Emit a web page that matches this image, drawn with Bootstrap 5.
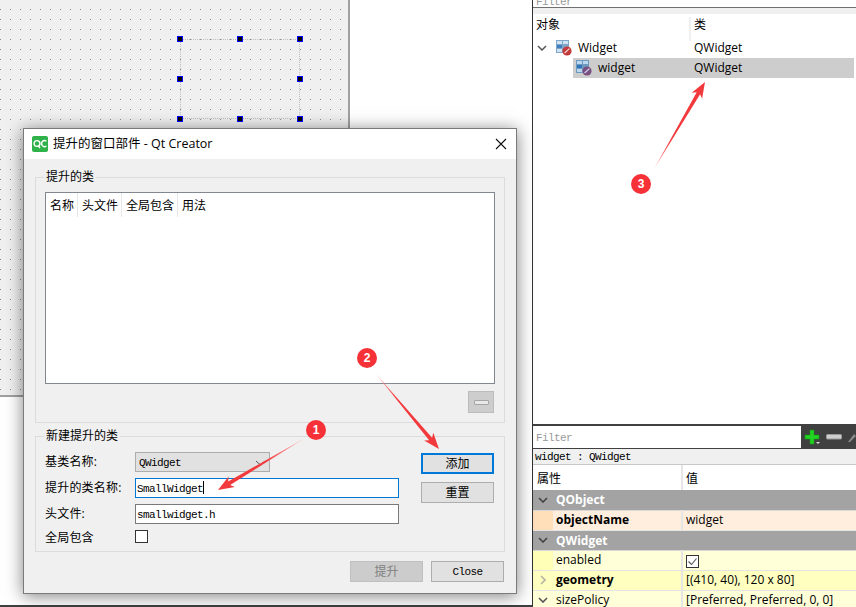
<!DOCTYPE html>
<html lang="zh">
<head>
<meta charset="utf-8">
<title>Qt Creator</title>
<link href="https://cdn.jsdelivr.net/npm/bootstrap@5.3.0/dist/css/bootstrap.min.css" rel="stylesheet">
<style>
html,body{margin:0;height:607px;overflow:hidden;background:#fff;}
body,.scene{font-family:"Open Sans","Noto Sans CJK SC",sans-serif;font-size:12px;line-height:16px;color:#000;}
.mono{font-family:"Liberation Mono","Noto Sans CJK SC",monospace;font-size:11px;letter-spacing:-.6px;}
.scene{position:relative;width:856px;height:607px;overflow:hidden;}
.leftpane{width:533px;height:607px;border-right:1px solid #333;border-bottom:2px solid #404040;flex:none;}
.canvas{position:relative;width:350px;height:397px;background-color:#f0f0f0;border-right:2px solid #a0a0a0;border-bottom:2px solid #a0a0a0;
 background-image:radial-gradient(circle at .5px .5px,#8a8a8a .7px,transparent .8px);background-size:10px 10px;background-position:0 9px;}
.selframe{position:absolute;left:180px;top:39px;width:120px;height:80px;border:1px dotted #c0c0c0;}
.grip{position:absolute;width:6px;height:6px;background:#000;border:1px solid #0000ff;}
.rightpane{flex:1;min-width:0;height:607px;overflow:hidden;}
.topfilter{height:8px;background:#fff;border-bottom:1px solid #707070;color:#999;overflow:hidden;padding-left:3px;display:flex;align-items:flex-end;font-size:11px;line-height:10px;flex:none;}
.topgap{height:6px;background:#f0f0f0;flex:none;}
.treehead{height:24px;padding-top:3px;flex:none;}
.tc1{width:158px;flex:none;padding-left:3px;border-right:2px solid #f0f0f0;height:24px;}
.tc2{padding-left:3px;}
.treerow{height:20px;line-height:20px;flex:none;}
.chev{width:23px;flex:none;display:flex;align-items:center;padding-left:4px;}
.treecell{width:135px;flex:none;display:flex;align-items:center;}
.selrow{background:#cdcdcd;margin-left:40px;margin-right:2px;}
.selcell{width:118px;flex:none;display:flex;align-items:center;padding-left:3px;}
.ticon{margin-right:6px;flex:none;}
.rightfill{height:346px;flex:none;background:#fff;}
.darkbar{height:25px;flex:none;background:#404040;border-top:2px solid #404040;border-bottom:1px solid #404040;}
.pfilter{width:268px;background:#fff;color:#999;padding-left:3px;height:22px;line-height:24px;}
.tools{gap:5px;padding-left:3px;}
.objlabel{height:16px;flex:none;background:#f0f0f0;border-bottom:1px solid #c8c8c8;line-height:16px;padding-left:2px;}
.ptable{width:100%;table-layout:fixed;margin:0;flex:none;--bs-table-bg:transparent;}
.ptable td,.ptable th{padding:0;height:20px;line-height:17px;vertical-align:top;border:0;border-bottom:1px solid #e4e4e4;font-weight:400;color:#000;white-space:nowrap;overflow:hidden;background:transparent;box-shadow:none;}
.ptable th{height:25px;border-bottom:0;padding:3px 0 0 4px;line-height:21px;}
.ptable th.valcol{border-left:2px solid #e6e6e6;padding:3px 0 0 3px;}
.ptable .valcol{border-left:2px solid #e6e6e6;padding-left:3px;}
.ptable .namecell{padding-left:0;}
.namewrap{display:flex;height:19px;align-items:center;gap:3px;}
.namewrap span:last-child{margin-top:-2px;}
.grp .namewrap span:last-child{margin-top:0;}
.gut{width:20px;flex:none;display:flex;align-items:center;justify-content:center;align-self:stretch;}
.grp td{background:#a3a3a3;color:#fff;font-weight:700;border-bottom-color:#d8d8d8;}
.org td{background:#ffeedd;}
.org .gut{background:#ffdfb9;}
.yl1 td{background:#ffffd8;}
.yl1 .gut{background:#ffffb8;}
.yl2 td{background:#ffffc0;}
.yl3 td{background:#ffffd8;}
.fw-b{font-weight:700;}
.chk{width:13px;height:13px;border:1px solid #333;background:#fff;display:block;}
.tick{margin-top:4px;}

/* dialog */
.dlg{position:absolute;left:23px;top:128px;width:494px;height:466px;background:#f0f0f0;border:1px solid #7a7a7a;box-shadow:0 2px 16px rgba(0,0,0,.5);}
.dlgtitle{height:30px;background:#fff;padding-left:8px;font-size:12.5px;}
.qc{width:16px;height:16px;margin-right:5px;flex:none;}
.dlgclose{width:12px;height:12px;margin-left:auto;margin-right:9px;}
.dlgbody{padding:10px 11px 0;}
.grpbox{border:1px solid #dcdcdc;padding:0 9px;min-width:0;margin:0;}
.grpbox legend{float:none;width:auto;margin:0 0 0 -1px;padding:0 2px;font-size:12px;line-height:16px;}
.grp1{height:254px;padding-top:7px;padding-bottom:8px;}
.grp2{height:124px;margin-top:5px;padding-top:8px;}
.listbox{height:192px;background:#fff;border:1px solid #828790;margin-right:0;width:450px;}
.lhead{height:25px;}
.lhead span{display:flex;align-items:center;padding-left:4px;padding-top:2px;height:24px;border-right:1px solid #e6e6e6;flex:none;}
.lhead span:last-child{border-right:0;}
.minusbtn.btn{width:26px;height:22px;background:#cdcdcd;border:1px solid #bcbcbc;margin:7px 1px 0 auto;display:flex;align-items:center;justify-content:center;border-radius:0;padding:0;}
.minusbtn i{display:block;width:15px;height:5px;background:#e8e8e8;border:1px solid #a5a5a5;border-radius:1px;}
.formcol{width:354px;flex:none;}
.frow{height:20px;margin-bottom:6px;}
.flabel{width:90px;flex:none;font-size:12px;letter-spacing:.2px;}
.combo{width:135px;height:20px;background:#e1e1e1;border:1px solid #adadad;display:flex;align-items:center;padding:1px 3px 0;justify-content:space-between;}
.qin.form-control{width:264px;height:20px;min-height:0;padding:0 1px;border:1px solid #7a7a7a;border-radius:0;background:#fff;box-shadow:none;color:#000;font-family:"Liberation Mono",monospace;font-size:11px;letter-spacing:-.6px;line-height:20px;}
.qin.focused{border-color:#0078d7;}
.caret{display:inline-block;width:1px;height:13px;background:#000;vertical-align:-2px;}
.btncol{padding-left:22px;padding-top:1px;}
.qbtn.btn{width:73px;height:21px;padding:0;border:1px solid #adadad;border-radius:0;background:#e1e1e1;color:#000;font-size:12px;line-height:18px;display:block;}
.qbtn.btn.mono{font-size:11px;}
.qbtn.btn.prim{border:2px solid #0078d7;line-height:17px;}
.qbtn.btn.off{background:#cccccc;border-color:#bfbfbf;color:#808080;opacity:1;}
.btngap{margin-top:8px;}
.foot{margin-top:9px;gap:8px;padding-right:1px;}

.overlay{position:absolute;left:0;top:0;width:856px;height:607px;pointer-events:none;}
.pin{position:absolute;width:20px;height:20px;border-radius:50%;background:#f63238;color:#fff;font-size:12px;font-weight:700;line-height:20px;text-align:center;font-family:"Liberation Sans",sans-serif;}
</style>
</head>
<body>
<div class="scene d-flex">
  <div class="leftpane">
    <div class="canvas">
      <div class="selframe"></div>
      <span class="grip" style="left:177px;top:36px"></span>
      <span class="grip" style="left:237px;top:36px"></span>
      <span class="grip" style="left:297px;top:36px"></span>
      <span class="grip" style="left:177px;top:76px"></span>
      <span class="grip" style="left:297px;top:76px"></span>
      <span class="grip" style="left:177px;top:116px"></span>
      <span class="grip" style="left:237px;top:116px"></span>
      <span class="grip" style="left:297px;top:116px"></span>
    </div>
  </div>

  <div class="rightpane d-flex flex-column">
    <div class="topfilter mono">Filter</div>
    <div class="topgap"></div>
    <div class="treehead d-flex">
      <div class="tc1">对象</div>
      <div class="tc2">类</div>
    </div>
    <div class="treerow d-flex">
      <div class="chev"><svg width="10" height="6" viewBox="0 0 10 6"><path d="M1 1l4 4 4-4" fill="none" stroke="#555" stroke-width="1.5"/></svg></div>
      <div class="treecell">
        <svg class="ticon" width="16" height="16" viewBox="0 0 16 16"><rect x="0" y="0" width="13" height="13" fill="#7ea6c9"/><rect x="1" y="1" width="5" height="3" fill="#cfe3f3"/><rect x="7" y="1" width="5" height="3" fill="#cfe3f3"/><rect x="1" y="5" width="5" height="3" fill="#3f7fbd"/><rect x="1" y="9" width="5" height="3" fill="#cfe3f3"/><circle cx="11" cy="11" r="4.6" fill="#c43a3a"/><path d="M8.6 13l4.8-4.4" stroke="#f3d5d5" stroke-width="1.2"/></svg>
        <span>Widget</span>
      </div>
      <div class="tc2">QWidget</div>
    </div>
    <div class="treerow selrow d-flex">
      <div class="selcell">
        <svg class="ticon" width="16" height="16" viewBox="0 0 16 16"><rect x="0" y="0" width="13" height="13" fill="#6f9ac0"/><rect x="1" y="1" width="5" height="3" fill="#bcd8ee"/><rect x="7" y="1" width="5" height="3" fill="#bcd8ee"/><rect x="1" y="5" width="5" height="3" fill="#2f75bb"/><rect x="1" y="9" width="5" height="3" fill="#bcd8ee"/><circle cx="11" cy="11" r="4.6" fill="#7a4f82"/><path d="M8.6 13l4.8-4.4" stroke="#d5d5ee" stroke-width="1.2"/></svg>
        <span>widget</span>
      </div>
      <div class="tc2">QWidget</div>
    </div>
    <div class="rightfill"></div>

    <div class="darkbar d-flex">
      <div class="pfilter mono">Filter</div>
      <div class="tools d-flex align-items-center">
        <svg width="17" height="17" viewBox="0 0 17 17"><path d="M6 1h4v5h5v4h-5v5H6v-5H1V6h5z" fill="#22d422" stroke="#159015" stroke-width=".6"/><path d="M12 13h4l-2 2z" fill="#ddd"/></svg>
        <svg width="16" height="6" viewBox="0 0 16 6"><rect x=".5" y=".5" width="15" height="4.5" rx="1" fill="#cfcfcf" stroke="#9a9a9a"/></svg>
        <svg width="9" height="12" viewBox="0 0 9 12"><path d="M1 11l6-8 2 2-6 6z" fill="#8a8a8a"/></svg>
      </div>
    </div>
    <div class="objlabel mono">widget : QWidget</div>
    <table class="table ptable">
      <colgroup><col style="width:149px"><col></colgroup>
      <thead><tr><th>属性</th><th class="valcol">值</th></tr></thead>
      <tbody>
        <tr class="grp"><td colspan="2"><div class="namewrap"><span class="gut"><svg width="10" height="6" viewBox="0 0 10 6"><path d="M1 1l4 4 4-4" fill="none" stroke="#444" stroke-width="1.6"/></svg></span><span>QObject</span></div></td></tr>
        <tr class="org"><td class="namecell"><div class="namewrap"><span class="gut"></span><span class="fw-b">objectName</span></div></td><td class="valcol">widget</td></tr>
        <tr class="grp"><td colspan="2"><div class="namewrap"><span class="gut"><svg width="10" height="6" viewBox="0 0 10 6"><path d="M1 1l4 4 4-4" fill="none" stroke="#444" stroke-width="1.6"/></svg></span><span>QWidget</span></div></td></tr>
        <tr class="yl1"><td class="namecell"><div class="namewrap"><span class="gut"></span><span>enabled</span></div></td><td class="valcol"><svg class="d-block tick" width="13" height="13" viewBox="0 0 13 13"><rect x=".5" y=".5" width="12" height="12" fill="#fff" stroke="#333"/><path d="M2.5 6.5l3 3 5-6" fill="none" stroke="#555" stroke-width="1.1"/></svg></td></tr>
        <tr class="yl2"><td class="namecell"><div class="namewrap"><span class="gut"><svg width="6" height="10" viewBox="0 0 6 10"><path d="M1 1l4 4-4 4" fill="none" stroke="#b5b5a0" stroke-width="1.6"/></svg></span><span class="fw-b">geometry</span></div></td><td class="valcol">[(410, 40), 120 x 80]</td></tr>
        <tr class="yl3"><td class="namecell"><div class="namewrap"><span class="gut"><svg width="10" height="6" viewBox="0 0 10 6"><path d="M1 1l4 4 4-4" fill="none" stroke="#555" stroke-width="1.6"/></svg></span><span>sizePolicy</span></div></td><td class="valcol">[Preferred, Preferred, 0, 0]</td></tr>
      </tbody>
    </table>
  </div>

  <div class="dlg">
    <div class="dlgtitle d-flex align-items-center">
      <svg class="qc" viewBox="0 0 16 16"><rect width="16" height="16" rx="2" fill="#2fb24a"/><circle cx="5" cy="7.5" r="2.9" fill="none" stroke="#fff" stroke-width="1.4"/><path d="M6 9.5l2 2.5" stroke="#fff" stroke-width="1.3"/><path d="M14.4 5.2a3 3 0 1 0 0 4.8" fill="none" stroke="#fff" stroke-width="1.4"/></svg>
      <span>提升的窗口部件 - Qt Creator</span>
      <svg class="dlgclose" viewBox="0 0 12 12"><path d="M1 1l10 10M11 1L1 11" stroke="#111" stroke-width="1.1"/></svg>
    </div>
    <div class="dlgbody">
      <fieldset class="grpbox grp1 d-flex flex-column">
        <legend>提升的类</legend>
        <div class="listbox">
          <div class="lhead d-flex">
            <span style="width:32px">名称</span><span style="width:44px">头文件</span><span style="width:56px">全局包含</span><span>用法</span>
          </div>
        </div>
        <button class="btn minusbtn" type="button" aria-label="remove"><i></i></button>
      </fieldset>
      <fieldset class="grpbox grp2">
        <legend>新建提升的类</legend>
        <div class="d-flex">
          <div class="formcol">
            <div class="frow d-flex align-items-center"><span class="flabel">基类名称:</span><div class="combo mono"><span>QWidget</span><svg width="11" height="6" viewBox="0 0 11 6"><path d="M1 1l4.5 4L10 1" fill="none" stroke="#555"/></svg></div></div>
            <div class="frow d-flex align-items-center"><span class="flabel">提升的类名称:</span><div class="form-control qin focused">SmallWidget<span class="caret"></span></div></div>
            <div class="frow d-flex align-items-center"><span class="flabel">头文件:</span><div class="form-control qin">smallwidget.h</div></div>
            <div class="frow d-flex align-items-start"><span class="flabel">全局包含</span><span class="chk"></span></div>
          </div>
          <div class="btncol">
            <button class="btn qbtn prim" type="button">添加</button>
            <button class="btn qbtn btngap" type="button">重置</button>
          </div>
        </div>
      </fieldset>
      <div class="foot d-flex justify-content-end">
        <button class="btn qbtn off" type="button">提升</button>
        <button class="btn qbtn mono" type="button">Close</button>
      </div>
    </div>
  </div>

  <svg class="overlay" viewBox="0 0 856 607">
    <defs>
      <linearGradient id="ga1" gradientUnits="userSpaceOnUse" x1="305" y1="438" x2="218" y2="490"><stop offset="0" stop-color="#ffc0c0"/><stop offset=".45" stop-color="#f23a3d"/></linearGradient>
      <linearGradient id="ga2" gradientUnits="userSpaceOnUse" x1="376" y1="374" x2="439" y2="449"><stop offset="0" stop-color="#ff9a9a"/><stop offset=".35" stop-color="#f23a3d"/></linearGradient>
      <linearGradient id="ga3" gradientUnits="userSpaceOnUse" x1="654" y1="169" x2="705" y2="82"><stop offset="0" stop-color="#ff9a9a"/><stop offset=".35" stop-color="#f23a3d"/></linearGradient>
    </defs>
    <polygon fill="url(#ga1)" points="305,438 230.2,485 234.8,487 218,490 228.6,476.6 228.2,481.6"/>
    <polygon fill="url(#ga2)" points="376,374 432.1,437.7 433.3,432.8 439,449 424.1,440.6 429.1,440.3"/>
    <polygon fill="url(#ga3)" points="654,169 700.1,94.2 702.1,98.8 705,82 691.7,92.8 696.7,92.2"/>
  </svg>
  <span class="pin" style="left:306px;top:420px">1</span>
  <span class="pin" style="left:357px;top:348px">2</span>
  <span class="pin" style="left:631px;top:174px">3</span>
</div>
<script src="https://cdn.jsdelivr.net/npm/bootstrap@5.3.0/dist/js/bootstrap.bundle.min.js"></script>
</body>
</html>
